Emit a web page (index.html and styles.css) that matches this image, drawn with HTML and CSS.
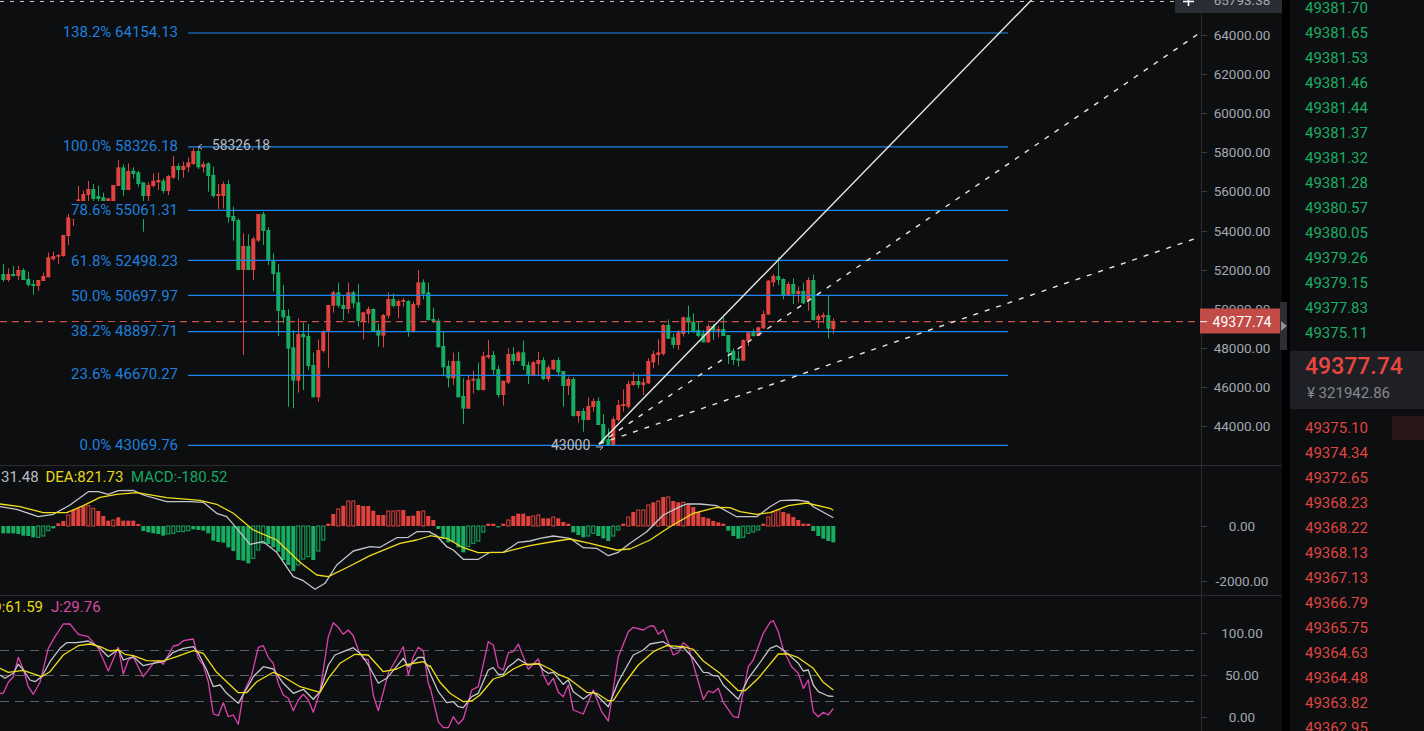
FILE: index.html
```html
<!DOCTYPE html>
<html lang="en">
<head>
<meta charset="utf-8">
<title>BTC chart</title>
<link rel="stylesheet" href="styles.css">
</head>
<body>
<main class="page">
  <section class="chart">
    <svg class="chart-svg" width="1282" height="731" viewBox="0 0 1282 731">
      <line class="topcross" x1="0" y1="1.5" x2="1175" y2="1.5"/>
      <g id="candles"></g>
      <line class="priceline" x1="0" y1="321.7" x2="1201" y2="321.7"/>
      <g class="fib-lines">
        <line x1="188" x2="1008" y1="33" y2="33"/>
        <line x1="188" x2="1008" y1="146.8" y2="146.8"/>
        <line x1="188" x2="1008" y1="210.4" y2="210.4"/>
        <line x1="188" x2="1008" y1="260.4" y2="260.4"/>
        <line x1="188" x2="1008" y1="295.3" y2="295.3"/>
        <line x1="188" x2="1008" y1="331.7" y2="331.7"/>
        <line x1="188" x2="1008" y1="375.3" y2="375.3"/>
        <line x1="188" x2="1008" y1="445.3" y2="445.3"/>
      </g>
      <g class="fib-bg">
        <rect x="62" y="23" width="117" height="18"/>
        <rect x="62" y="137" width="117" height="18"/>
        <rect x="70" y="201" width="109" height="18"/>
        <rect x="70" y="251" width="109" height="18"/>
        <rect x="70" y="286" width="109" height="18"/>
        <rect x="70" y="322" width="109" height="18"/>
        <rect x="70" y="366" width="109" height="18"/>
        <rect x="78" y="436" width="101" height="18"/>
      </g>
      <g class="fib-text">
        <text x="178" y="37">138.2% 64154.13</text>
        <text x="178" y="151.3">100.0% 58326.18</text>
        <text x="178" y="215">78.6% 55061.31</text>
        <text x="178" y="265.7">61.8% 52498.23</text>
        <text x="178" y="300.7">50.0% 50697.97</text>
        <text x="178" y="335.7">38.2% 48897.71</text>
        <text x="178" y="379.3">23.6% 46670.27</text>
        <text x="178" y="450">0.0% 43069.76</text>
      </g>
      <text class="mark mark-high" x="212" y="150">58326.18</text>
      <path class="mark-arrow" d="M202 144 L198 147 L202 149"/>
      <text class="mark" x="551" y="450">43000</text>
      <path class="mark-arrow" d="M596 447 H603 L600 450"/>
      <line class="draw" x1="599" y1="444" x2="1031.5" y2="0"/>
      <line class="draw dash" x1="599" y1="444" x2="1201" y2="32"/>
      <line class="draw dash" x1="599" y1="444" x2="1197" y2="238"/>

      <line class="sep" x1="0" y1="465.5" x2="1282" y2="465.5"/>
      <line class="sep" x1="0" y1="595.5" x2="1282" y2="595.5"/>
      <line class="sep" x1="1201.5" y1="0" x2="1201.5" y2="731"/>

      <g id="macd-bars"></g>
      <g id="macd-lines"></g>
      <text class="head c-white" x="1" y="482">31.48</text>
      <text class="head c-yellow" x="45.5" y="482">DEA:821.73</text>
      <text class="head c-green" x="131" y="482">MACD:-180.52</text>

      <line class="kdj-grid" x1="0" x2="1197" y1="650.5" y2="650.5"/>
      <line class="kdj-grid" x1="0" x2="1197" y1="675.5" y2="675.5"/>
      <line class="kdj-grid" x1="0" x2="1197" y1="701.5" y2="701.5"/>
      <g id="kdj-lines"></g>
      <text class="head c-yellow" x="43" y="612" text-anchor="end">D:61.59</text>
      <text class="head c-pink" x="51" y="612">J:29.76</text>

      <rect class="zoom-box" x="1175" y="0" width="107" height="13"/>
      <path class="zoom-plus" d="M1183 1.5h11M1188.5 -3v9"/>

      <g class="ticks">
        <path d="M1202 35.5h5M1202 74.5h5M1202 113.5h5M1202 152.5h5M1202 191.5h5M1202 231.5h5M1202 270.5h5M1202 309.5h5M1202 348.5h5M1202 387.5h5M1202 426.5h5M1202 526.5h5M1202 581.5h5M1202 633.5h5M1202 675.5h5M1202 717.5h5"/>
      </g>
      <g class="axis">
        <text x="1242" y="5">65793.38</text>
        <text x="1242" y="40">64000.00</text>
        <text x="1242" y="79">62000.00</text>
        <text x="1242" y="118">60000.00</text>
        <text x="1242" y="157">58000.00</text>
        <text x="1242" y="196">56000.00</text>
        <text x="1242" y="235.5">54000.00</text>
        <text x="1242" y="274.5">52000.00</text>
        <text x="1242" y="313.5">50000.00</text>
        <text x="1242" y="353">48000.00</text>
        <text x="1242" y="392">46000.00</text>
        <text x="1242" y="431">44000.00</text>
        <text x="1242" y="531">0.00</text>
        <text x="1242" y="586">-2000.00</text>
        <text x="1242" y="638">100.00</text>
        <text x="1242" y="680">50.00</text>
        <text x="1242" y="722">0.00</text>
      </g>
      <rect class="price-tag" x="1200" y="308.5" width="80" height="25"/>
      <line class="price-tick" x1="1200" x2="1207" y1="321.7" y2="321.7"/>
      <text class="price-tag-text" x="1242" y="326.5">49377.74</text>
    </svg>
    <div class="handle"><span class="handle-arrow"></span></div>
  </section>

  <aside class="book">
    <ul class="rows rows-up">
      <li>49381.70</li><li>49381.65</li><li>49381.53</li><li>49381.46</li><li>49381.44</li>
      <li>49381.37</li><li>49381.32</li><li>49381.28</li><li>49380.57</li><li>49380.05</li>
      <li>49379.26</li><li>49379.15</li><li>49377.83</li><li>49375.11</li>
    </ul>
    <div class="last">
      <div class="last-price">49377.74</div>
      <div class="last-cny">¥ 321942.86</div>
    </div>
    <ul class="rows rows-down">
      <li class="has-depth">49375.10</li><li>49374.34</li><li>49372.65</li><li>49368.23</li><li>49368.22</li>
      <li>49368.13</li><li>49367.13</li><li>49366.79</li><li>49365.75</li><li>49364.63</li>
      <li>49364.48</li><li>49363.82</li><li>49362.95</li>
    </ul>
  </aside>
</main>
<script src="chart.js"></script>
</body>
</html>
```

FILE: styles.css
```css
* { box-sizing: border-box; }
html, body { margin: 0; padding: 0; height: 100%; background: #000; overflow: hidden; }
body { font-family: Roboto, "Liberation Sans", sans-serif; }

.page { display: flex; width: 1424px; height: 731px; gap: 8px; background: #000; }

.chart { position: relative; width: 1282px; height: 731px; background: #0d0e10; flex: none; }
.chart-svg { display: block; font-family: Roboto, "Liberation Sans", sans-serif; }

.topcross { stroke: #c9cbd0; stroke-width: 1; stroke-dasharray: 4 6; }
.priceline { stroke: #c9504a; stroke-width: 1.2; stroke-dasharray: 7 5; }
.fib-lines line { stroke: #1f88ee; stroke-width: 1.2; }
.fib-bg rect { fill: #0d0e10; }
.fib-text text { fill: #1f7fdc; font-size: 15px; text-anchor: end; }
.mark { fill: #b9bcc2; font-size: 14px; }
.mark-high { font-size: 13.8px; }
.mark-arrow { fill: none; stroke: #b9bcc2; stroke-width: 1; }
.draw { stroke: #e8e8e8; stroke-width: 1.4; }
.draw.dash { stroke-dasharray: 5 7; }
.sep { stroke: #2a2c30; stroke-width: 1; }
.kdj-grid { stroke: #5d6066; stroke-width: 1; stroke-dasharray: 9 6; }
.ticks path { stroke: #3a3c41; stroke-width: 1; fill: none; }
.axis text { fill: #a3a8b0; font-size: 13.5px; text-anchor: middle; }
.head { font-size: 15px; }
.c-white { fill: #b9bcc2; }
.c-yellow { fill: #e8d91c; }
.c-green { fill: #17a862; }
.c-pink { fill: #d94aa8; }

.zoom-box { fill: #2a2d33; }
.zoom-plus { stroke: #fff; stroke-width: 1.6; fill: none; }
.price-tag { fill: #c14c47; }
.price-tick { stroke: #fff; stroke-width: 1; }
.price-tag-text { fill: #fff; font-size: 14px; text-anchor: middle; }

.candle-up { fill: #e2433f; }
.candle-down { fill: #17ad62; }
.bar-up { fill: #e2433f; }
.bar-down { fill: #17ad62; }
.bar-hollow { fill: none; stroke-width: 1; }
.bar-hollow.bar-up { stroke: #e2433f; }
.bar-hollow.bar-down { stroke: #17ad62; }
.ln { fill: none; stroke-width: 1.3; stroke-linejoin: round; }
.ln-white { stroke: #c4c6ca; }
.ln-yellow { stroke: #f0de1a; }
.ln-pink { stroke: #dd42ae; }

.handle {
  position: absolute; left: 1280px; top: 302px; width: 7px; height: 48px;
  background: #2c2e33; display: flex; align-items: center; justify-content: center; z-index: 2;
}
.handle-arrow {
  width: 0; height: 0;
  border-left: 6px solid #8d9097; border-top: 5px solid transparent; border-bottom: 5px solid transparent;
}

.book { flex: 1; min-width: 0; height: 731px; background: #0d0e10; overflow: hidden; }
.rows { list-style: none; margin: 0; padding: 0 0 0 15px; font-size: 15px; }
.rows li { height: 25px; line-height: 25px; position: relative; }
.rows-up { margin-top: -4px; color: #1aad65; }
.rows-down { color: #df4640; margin-top: 7px; }
.has-depth::after {
  content: ""; position: absolute; right: 0; top: 0; width: 32px; height: 24px; background: #2a1717;
}
.last {
  height: 58px; margin-top: 5px; background: #1e2025; padding: 1px 0 0 15px;
  display: flex; flex-direction: column;
}
.last-price { color: #e8473f; font-size: 23px; font-weight: 500; line-height: 30px; }
.last-cny { color: #85888f; font-size: 15px; line-height: 23px; padding-left: 2px; }
```

FILE: chart.js
```js
const NS = "http://www.w3.org/2000/svg";
const el = (parent, tag, attrs) => {
  const n = document.createElementNS(NS, tag);
  for (const k in attrs) n.setAttribute(k, attrs[k]);
  parent.appendChild(n);
  return n;
};

// color wickTop bodyTop bodyBottom wickBottom, in 3x crop units
const c1 = `g 402 432 450 455|r 415 432 450 455|g 408 432 438 440|r 408 420 438 450|g 415 420 450 450|g 425 447 465 470|g 450 462 468 494|r 450 450 468 483|r 428 438 453 453|r 368 382 442 442|r 365 378 388 392|r 372 375 380 402|r 315 315 378 380|r 252 262 318 345|r 215 215 268 288|r 168 208 260 262|r 182 192 260 262|r 153 177 195 213|g 162 177 207 213|g 167 198 207 213|g 188 202 240 245|r 205 205 240 245|r 165 165 240 245|r 90 112 168 168|g 103 112 180 198|r 100 123 180 180|g 112 122 132 145|g 122 127 162 170|g 157 157 198 305|r 157 165 198 213|r 130 152 168 172|r 127 150 157 180|g 145 152 183 190|r 135 138 183 195|r 78 108 143 147|g 100 108 120 150|r 95 108 120 143|r 82 97 112 127|r 55 63 102 105|g 55 63 112 117|r 95 102 112 128|g 97 100 138 185|g 110 135 198 203|r 163 192 198 237|r 155 162 198 235|g 150 162 262 278|g 230 258 273 332|g 265 270 420 420|r 310 348 420 675|g 313 348 420 420|r 320 326 420 450|r 252 252 332 336|g 245 252 303 345|g 292 300 392 405|g 370 392 432 484|g 402 427 543 618|g 465 540 562 580|g 538 558 656 830|g 600 652 752 835|r 565 612 752 788|g 578 612 622 780|g 582 618 708 720|g 668 705 802 802|r 628 660 802 815|r 600 605 663 668|r 525 525 605 713|r 482 487 527 548|g 458 487 527 533|g 497 525 537 570|r 458 487 537 550|g 482 487 520 535|g 462 517 573 590|r 545 547 573 628|r 530 537 552 580|g 535 537 603 605|g 582 600 617 650|r 552 555 617 652|r 487 507 557 565|g 490 507 528 532|r 508 513 528 565|r 505 510 515 530|g 510 513 603 620|r 515 522 605 608|r 420 457 525 533|g 448 457 492 508|g 458 487 570 572|g 533 567 573 580|g 565 572 652 652`;
const c1b = `g 605 648 712 735|g 692 708 745 772|r 668 693 745 765|g 665 693 802 802`;
const c2 = `g 415 468 506 552|r 408 420 506 506|r 392 416 422 460|g 368 416 450 452|r 335 348 450 452|r 300 345 352 357|g 333 345 390 405|g 377 387 465 472|r 422 422 465 497|r 325 342 428 432|g 322 342 363 375|r 333 337 363 365|g 302 337 378 390|g 365 375 405 432|r 363 367 405 405|r 335 360 372 405|g 352 360 417 420|r 375 382 417 425|r 358 360 388 390|g 352 360 397 410|g 393 393 438 500|r 410 417 438 465|g 412 417 528 530|r 513 513 528 548|g 505 513 540 575|r 472 498 540 540|r 475 483 501 515|g 472 483 555 555|g 522 552 605 610|g 565 597 615 618|r 530 537 615 615|r 480 495 540 545|r 448 492 498 515|r 422 432 500 505|r 397 423 435 437|g 403 423 435 445|r 415 427 435 465|r 355 363 430 432|r 332 342 367 385|r 298 337 345 375|r 252 255 342 347|g 238 255 296 297|g 280 292 315 325|r 270 277 315 330|r 230 232 282 290|g 197 232 247 282|g 220 245 275 278|g 243 270 288 292|g 270 280 307 307|r 252 258 307 308|g 252 258 272 300|r 258 267 272 292|g 232 267 288 288|g 285 285 337 372|g 325 332 360 375|g 333 356 362 380|r 298 300 362 362|r 277 277 303 318|g 268 277 288 290|r 260 262 288 288|r 212 222 265 267|r 120 122 224 224|r 102 108 127 140|g 52 108 120 135|g 115 117 165 178|r 125 132 165 165|g 115 132 162 192|r 140 153 162 188|g 128 153 190 192|r 112 120 180 212|g 103 120 240 242|r 222 228 240 265|r 218 225 232 250|g 165 225 266 295|r 235 243 267 282`;

const candleRows = [];
c1.split("|").forEach(s => candleRows.push([s, 130]));
c1b.split("|").forEach(s => candleRows.push([s, 130]));
c2.split("|").forEach(s => candleRows.push([s, 240]));

const candles = document.getElementById("candles");
candleRows.forEach(([s, off], i) => {
  const [c, wt, bt, bb, wb] = s.split(" ");
  const cls = c === "r" ? "candle-up" : "candle-down";
  const y = v => off + Number(v) / 3;
  el(candles, "rect", { class: cls, x: 3 + 5 * i, y: y(wt), width: 1, height: y(wb) - y(wt) });
  el(candles, "rect", { class: cls, x: 1.3 + 5 * i, y: y(bt), width: 4, height: Math.max(1, y(bb) - y(bt)) });
});

// MACD histogram: bar end in crop units, h = hollow. Zero line at crop y 183 (offset 465)
const macd = `205 205 205 207 212 213 217 217h 213h 197h 190 175 168 150h 135 130 123 122h 130h 138 153 167 165h 157 167 167 167 177 198 202 205 207 212 207h 205h 200h 200h 197h 193 195 197 205 227 231 233 247 258 285 287 295 280h 255h 235h 237 247 260 285 300 318 300h 282h 275h 285 258h 225h 176 147 132h 122 108h 108h 120 123 123 137 150 150 138h 138h 137h 135 153 152 138 138h 153 165 192 222 232 232 247 262 245h 235h 228h 201h 176 176 187 176 165h 153 146 146 153 153h 150h 160 160 156h 160 171 176 202 210 217 213h 205h 213 220 228 213h 195h 176 156h 141 135h 135h 120h 112 108h 96 96h 108 112 112h 120 126 141 156 160 168 172 176 197 213 221 217h 205h 201h 195h 176 156h 141h 135h 141 146 156 165 176 176 198 213 221 228 232`;
const bars = document.getElementById("macd-bars");
const zero = 465 + 183 / 3;
macd.split(" ").forEach((s, i) => {
  const hollow = s.endsWith("h");
  const v = 465 + parseFloat(s) / 3;
  const up = v < zero;
  const top = Math.min(v, zero), h = Math.abs(v - zero);
  const cls = (up ? "bar-up" : "bar-down") + (hollow ? " bar-hollow" : "");
  if (hollow) el(bars, "rect", { class: cls, x: 1.8 + 5 * i, y: top, width: 3, height: h });
  else el(bars, "rect", { class: cls, x: 1.3 + 5 * i, y: top, width: 4, height: h });
});

const pts = (xo, yo, str) => str.trim().split(/\s+/).map(p => {
  const [x, y] = p.split(",").map(Number);
  return (xo + x / 3).toFixed(1) + "," + (yo + y / 3).toFixed(1);
}).join(" ");
const line = (parent, cls, a, b, yo) => {
  el(parent, "polyline", { class: "ln " + cls, points: pts(0, yo, a) + " " + pts(430, yo, b) });
};

const ml = document.getElementById("macd-lines");
line(ml, "ln-white",
  "0,125 50,133 115,155 160,148 210,120 265,80 295,80 325,88 355,77 400,76 430,90 500,110 570,110 610,112 650,145 680,155 710,190 750,238 790,230 830,262 880,335 910,347 945,373 975,355 1010,300 1060,258 1110,245 1140,247 1190,218 1225,217 1250,200 1290,200",
  "0,202 20,212 50,245 70,255 100,283 145,283 180,262 220,262 265,232 300,228 330,220 370,213 420,220 460,248 500,250 535,272 565,262 600,235 650,200 700,150 750,125 770,117 810,117 860,122 920,155 980,155 1020,125 1050,107 1100,105 1135,110 1150,125 1210,158", 465);
line(ml, "ln-yellow",
  "0,117 60,125 130,143 200,143 250,122 300,97 350,88 410,83 500,98 600,106 650,118 700,145 760,195 830,225 900,292 950,330 985,335 1050,303 1110,272 1200,235 1250,225 1290,213",
  "0,212 50,220 100,248 145,263 220,262 300,242 380,228 420,222 480,235 560,255 600,252 660,225 720,185 790,145 860,127 900,128 930,140 980,148 1020,143 1075,122 1130,114 1200,130 1210,136", 465);

const kl = document.getElementById("kdj-lines");
line(kl, "ln-pink",
  "0,295 10,295 25,262 40,245 55,187 70,222 85,275 100,298 120,262 145,160 165,125 190,87 210,87 235,118 265,125 295,160 325,228 355,157 370,237 385,195 400,187 430,245 460,205 475,197 490,208 520,153 535,150 550,137 580,132 595,190 610,210 625,260 640,357 655,362 670,323 685,365 700,360 715,388 730,295 755,240 775,157 790,152 805,187 820,205 835,265 850,300 865,310 880,347 895,315 910,298 925,315 940,352 960,290 985,125 1000,83 1015,97 1030,118 1045,105 1060,122 1075,165 1090,192 1105,195 1120,300 1135,347 1165,235 1210,155 1225,240 1240,185 1255,157 1270,167 1285,265 1290,280",
  "0,275 25,380 40,398 55,398 70,365 85,387 100,372 125,285 145,275 175,140 190,150 205,217 220,225 235,173 250,170 265,147 295,223 325,192 340,240 355,270 370,250 385,292 400,305 415,270 430,345 460,357 490,285 515,350 535,378 565,185 595,110 610,97 640,105 660,93 672,93 685,118 700,105 730,180 745,173 760,143 775,155 820,313 835,288 850,293 865,280 880,322 910,365 925,368 955,215 970,195 1000,115 1020,82 1030,77 1045,110 1060,165 1085,215 1105,235 1120,280 1135,255 1150,350 1165,365 1180,352 1195,360 1210,340", 595);
line(kl, "ln-white",
  "0,240 15,250 40,235 55,208 70,225 90,255 105,260 125,245 150,200 180,160 200,143 230,143 265,138 295,155 325,185 355,163 370,195 400,185 430,212 460,205 490,200 520,172 550,160 580,155 595,175 620,225 640,275 660,270 680,295 715,325 735,290 760,245 790,215 820,222 850,265 880,295 910,283 940,313 960,290 985,210 1005,180 1030,170 1060,158 1085,180 1105,210 1135,265 1160,250 1210,190 1225,215 1255,187 1270,187 1290,235",
  "0,235 25,290 50,323 70,320 85,335 100,338 125,305 145,295 175,225 190,218 205,238 220,238 235,215 250,205 265,192 295,210 325,205 340,225 355,235 370,232 400,268 415,255 430,290 460,312 490,290 535,335 565,260 610,180 640,165 660,147 700,140 730,160 760,157 790,190 820,232 835,233 850,242 865,243 880,270 925,313 955,250 985,210 1020,160 1040,152 1060,165 1105,205 1120,228 1135,225 1150,270 1165,290 1195,303 1210,304", 595);
line(kl, "ln-yellow",
  "0,220 25,232 70,226 125,245 150,230 190,180 235,152 270,147 300,155 330,168 355,165 375,178 400,182 440,197 490,198 530,185 580,167 610,175 650,232 680,260 715,293 740,293 770,260 820,232 850,245 900,275 960,292 985,250 1020,205 1065,178 1105,180 1150,230 1190,222 1215,210 1270,200 1290,215",
  "0,212 30,262 60,295 100,320 125,318 150,300 190,252 220,243 250,222 280,208 330,207 360,222 385,238 415,250 470,292 500,295 535,317 550,317 580,270 625,210 670,170 710,152 760,155 790,163 820,198 870,235 925,287 945,287 985,250 1045,177 1075,177 1105,188 1150,220 1180,262 1210,285", 595);
```
